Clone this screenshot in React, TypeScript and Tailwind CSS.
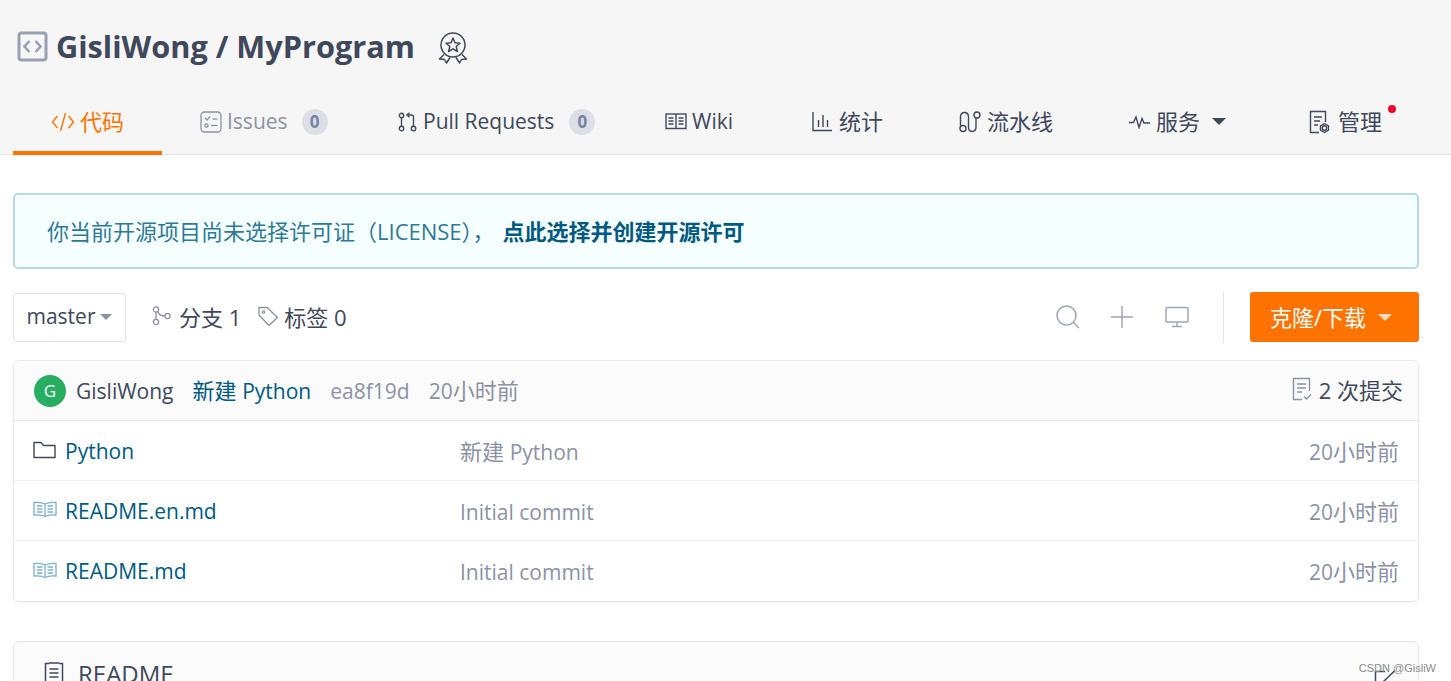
import React from 'react';

const FONT = '"Open Sans", "Noto Sans", "Noto Sans CJK SC", sans-serif';

// latin runs sit a touch smaller than the chinese ones
function L({ children }: { children: React.ReactNode }) {
  return <span className="text-[21px]">{children}</span>;
}

function RepoIcon() {
  return (
    <svg width="31" height="31" viewBox="0 0 31 31" fill="none">
      <rect x="2" y="2" width="27" height="27" rx="2.5" stroke="#9aa0b3" strokeWidth="3" />
      <path d="M12.5 10 L7.5 15.5 L12.5 21" stroke="#9aa0b3" strokeWidth="2.6" />
      <path d="M18.5 10 L23.5 15.5 L18.5 21" stroke="#9aa0b3" strokeWidth="2.6" />
    </svg>
  );
}

function BadgeIcon() {
  return (
    <svg width="30" height="32" viewBox="0 0 30 32" fill="none" stroke="#40485b" strokeWidth="1.5">
      <circle cx="15" cy="13" r="12" />
      <path d="M15 6 L17 10.8 L22 11.2 L18.2 14.5 L19.4 19.5 L15 16.8 L10.6 19.5 L11.8 14.5 L8 11.2 L13 10.8 Z" strokeLinejoin="round" />
      <path d="M6 22.5 L1.5 27 L6.5 27.5 L8.5 31 L12 25.5" strokeLinejoin="round" />
      <path d="M24 22.5 L28.5 27 L23.5 27.5 L21.5 31 L18 25.5" strokeLinejoin="round" />
    </svg>
  );
}

function Caret({ className }: { className: string }) {
  return <span className={`inline-block w-0 h-0 border-l-[7px] border-r-[7px] border-t-[7px] border-l-transparent border-r-transparent ${className}`} />;
}

const navIcons: Record<string, React.ReactNode> = {
  code: (
    <svg width="24" height="22" viewBox="0 0 24 22" fill="none" stroke="#fe7300" strokeWidth="1.4">
      <path d="M6.5 5 L1.5 11 L6.5 17" />
      <path d="M14.5 2 L9.5 20" />
      <path d="M17.5 5 L22.5 11 L17.5 17" />
    </svg>
  ),
  issues: (
    <svg width="22" height="22" viewBox="0 0 22 22" fill="none" stroke="#8c92a4" strokeWidth="1.3">
      <rect x="1" y="1" width="20" height="20" rx="3.5" />
      <path d="M5 7 L7 9 L10 5.5" />
      <path d="M12.5 8 H17.5" />
      <circle cx="6.5" cy="14.5" r="1.6" />
      <path d="M11 14.5 H17.5" />
    </svg>
  ),
  pr: (
    <svg width="19" height="20" viewBox="0 0 19 20" fill="none" stroke="#40485b" strokeWidth="1.4">
      <circle cx="3.5" cy="3.5" r="2.2" />
      <circle cx="3.5" cy="16.5" r="2.2" />
      <circle cx="15.5" cy="16.5" r="2.2" />
      <path d="M3.5 5.7 V14.3" />
      <path d="M15.5 14.3 V5 Q15.5 3 13.5 3 H9" />
      <path d="M11.5 0.8 L9 3 L11.5 5.2" />
    </svg>
  ),
  wiki: (
    <svg width="22" height="17" viewBox="0 0 22 17" fill="none" stroke="#40485b" strokeWidth="1.4">
      <rect x="1" y="1" width="20" height="14.5" />
      <path d="M11 1 V15.5" />
      <path d="M3.5 5 H8.5 M3.5 8 H8.5 M3.5 11 H8.5 M13.5 5 H18.5 M13.5 8 H18.5 M13.5 11 H18.5" />
    </svg>
  ),
  stats: (
    <svg width="20" height="21" viewBox="0 0 20 21" fill="none" stroke="#40485b" strokeWidth="1.4">
      <path d="M1 1 V19.5 H20" />
      <path d="M6.5 9 V16 M11 4 V16 M15.5 9 V16" />
    </svg>
  ),
  pipeline: (
    <svg width="22" height="22" viewBox="0 0 22 22" fill="none" stroke="#40485b" strokeWidth="1.4">
      <circle cx="4" cy="17.5" r="3" />
      <circle cx="18" cy="4" r="3" />
      <path d="M1.5 15.5 V6 Q1.5 1.5 5.5 1.5 Q9.5 1.5 9.5 6 V16 Q9.5 20.5 13 20.5 Q17 20.5 17 16 V7" />
    </svg>
  ),
  service: (
    <svg width="21" height="14" viewBox="0 0 21 14" fill="none" stroke="#40485b" strokeWidth="1.4">
      <path d="M0 7.5 H4.5 L7 2 L10 12.5 L13 3.5 L15 8 H21" />
    </svg>
  ),
  admin: (
    <svg width="21" height="24" viewBox="0 0 21 24" fill="none" stroke="#40485b" strokeWidth="1.4">
      <path d="M10 22.5 H1.5 V1.5 H16.5 V12" />
      <path d="M5 7 H13 M5 11 H11 M5 15 H9" />
      <circle cx="15.5" cy="18" r="2.2" />
      <path d="M15.5 13.5 L19.5 15.8 V20.2 L15.5 22.5 L11.5 20.2 V15.8 Z" />
    </svg>
  ),
};

function Count() {
  return (
    <span className="ml-[9px] w-[26px] h-[26px] rounded-full bg-[#dcdfe5] text-[#7383a6] text-[17px] font-bold flex items-center justify-center">
      0
    </span>
  );
}

function NavTab({ icon, active, muted, gap, width, children }: { icon: React.ReactNode; active?: boolean; muted?: boolean; gap: string; width: string; children?: React.ReactNode }) {
  return (
    <div className={`relative flex items-center h-[63px] pl-[38px] border-b-[4px] ${gap} ${width} ${active ? 'border-[#fe7300] text-[#fe7300]' : muted ? 'border-transparent text-[#8c92a4]' : 'border-transparent text-[#40485b]'}`}>
      {icon}
      {children}
    </div>
  );
}

function BookIcon() {
  return (
    <svg width="24" height="17" viewBox="0 0 24 17" fill="none" stroke="#7eb0c9" strokeWidth="1.3">
      <path d="M12 3 Q8 0.8 1 1.5 V14 Q8 13.2 12 15.5 Q16 13.2 23 14 V1.5 Q16 0.8 12 3 Z" />
      <path d="M12 3 V15.5" />
      <path d="M4 5 H9.5 M4 8 H9.5 M4 11 H9.5 M14.5 5 H20 M14.5 8 H20 M14.5 11 H20" />
    </svg>
  );
}

function FolderIcon() {
  return (
    <svg width="23" height="18" viewBox="0 0 23 18" fill="none" stroke="#40485b" strokeWidth="1.4">
      <path d="M1 16.5 V1.5 H8 L10.5 4.5 H22 V16.5 Z" strokeLinejoin="round" />
    </svg>
  );
}

const files = [
  { name: 'Python', message: <>新建 <L>Python</L></>, icon: <FolderIcon /> },
  { name: 'README.en.md', message: <L>Initial commit</L>, icon: <BookIcon /> },
  { name: 'README.md', message: <L>Initial commit</L>, icon: <BookIcon /> },
];

function FileRow({ name, message, icon, last }: { name: string; message: React.ReactNode; icon: React.ReactNode; last: boolean }) {
  return (
    <div className={`flex items-center h-[60px] pl-[19px] pr-[19px] pt-[2px] ${last ? '' : 'border-b border-[#f1f3f5]'}`}>
      <div className="w-[427px] flex items-center gap-[8px] text-[#005980]">
        <span className="-mt-1 w-[24px] flex">{icon}</span>
        <L>{name}</L>
      </div>
      <div className="flex-1 text-[#8c92a4]">{message}</div>
      <div className="text-[#8c92a4]"><L>20</L>小时前</div>
    </div>
  );
}

export default function App() {
  return (
    <div className="relative h-[681px] overflow-hidden bg-white text-[#40485b] text-[22px]" style={{ fontFamily: FONT }}>
      <header className="bg-[#f6f6f6] border-b border-[#e3e3e3] h-[155px] pl-[13px]">
        <div className="h-[92px] pl-[4px] flex items-center">
          <RepoIcon />
          <h1 className="ml-[8px] text-[30.7px] font-bold text-[#40485b]">GisliWong / MyProgram</h1>
          <span className="ml-[23px] mt-[4px] flex"><BadgeIcon /></span>
        </div>
        <nav className="flex">
          <NavTab icon={navIcons.code} active gap="gap-[5px]" width="w-[149px]">
            <span>代码</span>
          </NavTab>
          <NavTab icon={navIcons.issues} muted gap="gap-[5px]" width="w-[198px]">
            <L>Issues</L>
            <Count />
          </NavTab>
          <NavTab icon={navIcons.pr} gap="gap-[6px]" width="w-[267px]">
            <L>Pull Requests</L>
            <Count />
          </NavTab>
          <NavTab icon={navIcons.wiki} gap="gap-[5px]" width="w-[147px]">
            <L>Wiki</L>
          </NavTab>
          <NavTab icon={navIcons.stats} gap="gap-[7px]" width="w-[147px]">
            <span>统计</span>
          </NavTab>
          <NavTab icon={navIcons.pipeline} gap="gap-[6px]" width="w-[170px]">
            <span>流水线</span>
          </NavTab>
          <NavTab icon={navIcons.service} gap="gap-[6px]" width="w-[180px]">
            <span>服务</span>
            <Caret className="ml-[6px] border-t-[#40485b]" />
          </NavTab>
          <NavTab icon={navIcons.admin} gap="gap-[8px]" width="w-[140px]">
            <span>管理</span>
            <span className="absolute top-[13px] left-[117px] w-[8px] h-[8px] rounded-full bg-[#f0002a]" />
          </NavTab>
        </nav>
      </header>

      <main className="px-[13px] w-[1432px]">
        <div className="mt-[38px] h-[76px] border-2 border-[#b5dbe0] rounded-[5px] bg-[#f6ffff] pl-[32px] flex items-center text-[#2e7a96]">
          你当前开源项目尚未选择许可证（LICENSE）， <a className="ml-[8px] font-bold text-[#005980]">点此选择并创建开源许可</a>
        </div>

        <div className="mt-[23px] h-[50px] flex items-center">
          <div className="w-[113px] h-[49px] border border-[#e3e5e9] rounded-[3px] flex items-center justify-center gap-[5px]">
            <L>master</L>
            <span className="inline-block w-0 h-0 border-l-[6px] border-r-[6px] border-t-[6px] border-l-transparent border-r-transparent border-t-[#8c92a4]" />
          </div>
          <svg className="ml-[26px] -mt-[3px]" width="20" height="20" viewBox="0 0 20 20" fill="none" stroke="#8c92a4" strokeWidth="1.3">
            <circle cx="4" cy="3.5" r="2.6" />
            <circle cx="4" cy="16" r="2.6" />
            <circle cx="15.5" cy="10" r="2.6" />
            <path d="M4 6 V13.5 M6 5.5 Q7 10 13 10" />
          </svg>
          <span className="ml-[7px]">分支 1</span>
          <svg className="ml-[17px] -mt-[3px]" width="20" height="20" viewBox="0 0 20 20" fill="none" stroke="#8c92a4" strokeWidth="1.3">
            <path d="M1 1.5 H9 L19.5 11.5 L11 19.5 L1 9 Z" strokeLinejoin="round" />
            <circle cx="5.5" cy="6" r="1.2" />
          </svg>
          <span className="ml-[6px]">标签 0</span>

          <div className="ml-auto flex items-center">
            <svg width="24" height="24" viewBox="0 0 24 24" fill="none" stroke="#a0a5b5" strokeWidth="1.5">
              <circle cx="10.5" cy="10.5" r="9.5" />
              <path d="M17.5 17.5 L23 23" />
            </svg>
            <svg className="ml-[30px]" width="24" height="24" viewBox="0 0 24 24" fill="none" stroke="#a0a5b5" strokeWidth="1.5">
              <path d="M12 1 V23 M1 12 H23" />
            </svg>
            <svg className="ml-[31px]" width="24" height="22" viewBox="0 0 24 22" fill="none" stroke="#a0a5b5" strokeWidth="1.5">
              <rect x="1" y="1.5" width="22" height="14.5" rx="1.5" />
              <path d="M12 16 V20 M7 20.5 H17" />
            </svg>
            <div className="ml-[34px] h-[52px] w-px bg-[#e3e5e9]" />
            <div className="ml-[26px] w-[169px] h-[50px] pl-[20px] rounded-[3px] bg-[#fe7300] text-white flex items-center gap-[12px]">
              <span>克隆/下载</span>
              <Caret className="border-t-[#ffdcc0]" />
            </div>
          </div>
        </div>

        <div className="mt-[18px] border border-[#e6e8ec] rounded-[6px] shadow-[0_1px_1px_rgba(0,0,0,0.04)]">
          <div className="h-[60px] bg-[#fbfbfb] rounded-t-[6px] border-b border-[#e3e5e9] flex items-center pl-[20px] pr-[15px]">
            <span className="w-[32px] h-[32px] rounded-full bg-[#27ae60] text-white text-[17px] flex items-center justify-center">G</span>
            <span className="ml-[10px]"><L>GisliWong</L></span>
            <span className="ml-[19px] text-[#005980]">新建 <L>Python</L></span>
            <span className="ml-[19px] text-[#8c92a4]"><L>ea8f19d</L></span>
            <span className="ml-[19px] text-[#8c92a4]"><L>20</L>小时前</span>
            <svg className="ml-auto -mt-[4px]" width="20" height="24" viewBox="0 0 20 24" fill="none" stroke="#8c92a4" strokeWidth="1.4">
              <path d="M10 22.5 H1.5 V1.5 H17.5 V14" />
              <path d="M5 7 H14 M5 11 H14 M5 15 H10" />
              <path d="M12 19.5 L14.5 22 L19 17.5" />
            </svg>
            <span className="ml-[7px]">2 次提交</span>
          </div>
          {files.map((file, index) => (
            <FileRow key={file.name} {...file} last={index === files.length - 1} />
          ))}
        </div>

        <div className="mt-[39px] h-[60px] border border-[#e6e8ec] rounded-t-[6px] bg-[#fbfbfb] flex items-start pl-[30px] pt-[14px]">
          <svg className="mt-[6px]" width="20" height="24" viewBox="0 0 20 24" fill="none" stroke="#40485b" strokeWidth="1.5">
            <path d="M5 1.5 H1.5 V22.5 H18.5 V1.5 H15" />
            <path d="M5 1 H15 M5.5 7 H14.5 M5.5 11 H14.5 M5.5 15 H14.5" />
          </svg>
          <span className="ml-[14px] text-[24px]">README</span>
          <svg className="absolute left-[1374px] top-[670px]" width="24" height="16" viewBox="0 0 24 16" fill="none" stroke="#40485b" strokeWidth="1.5">
            <path d="M1.5 11 V1.5 H11 M21 0.5 L9 12" />
          </svg>
        </div>
      </main>

      <span className="absolute right-[15px] top-[660px] text-[11px] text-[#8a8a8a]" style={{ fontFamily: '"Liberation Sans", sans-serif' }}>
        CSDN @GisliW
      </span>
    </div>
  );
}
